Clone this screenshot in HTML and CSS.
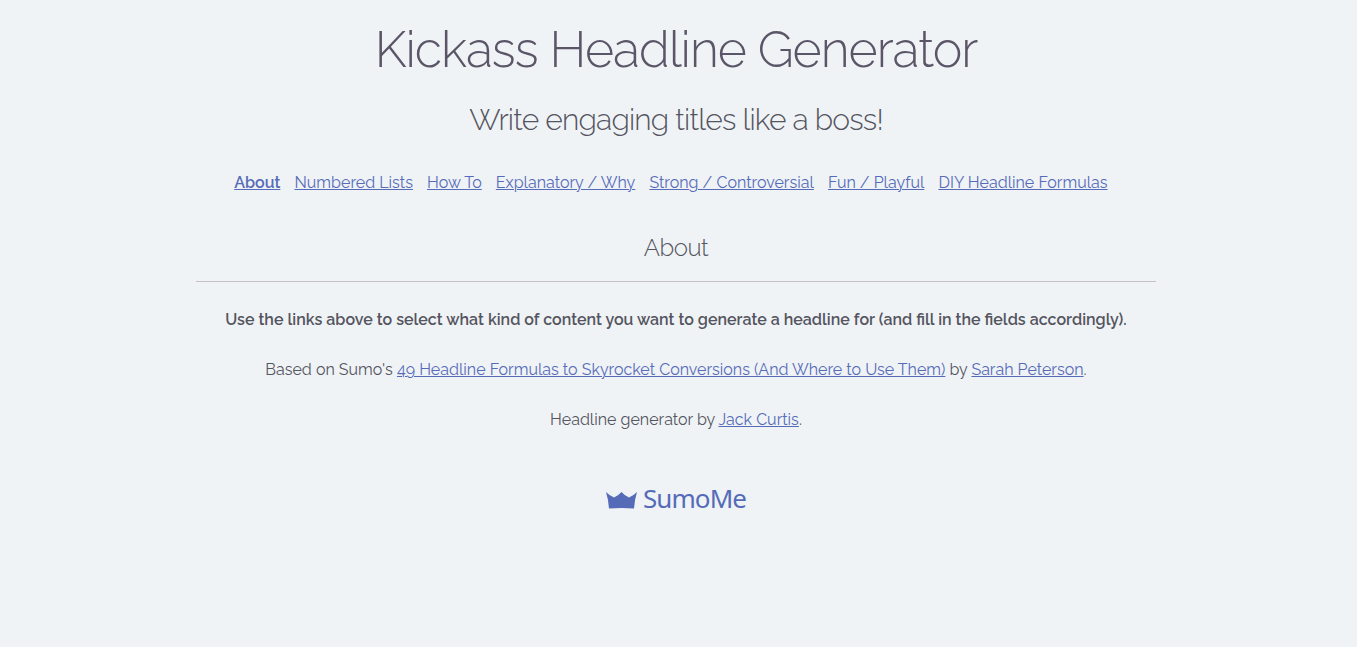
FILE: index.html
```html
<!DOCTYPE html>
<html lang="en">
<head>
<meta charset="utf-8">
<title>Kickass Headline Generator</title>
<link rel="stylesheet" href="styles.css">
</head>
<body>
<main class="page">
<h1 class="title">Kickass Headline Generator</h1>
<h2 class="subtitle">Write engaging titles like a boss!</h2>
<nav class="nav">
<a class="active" href="#">About</a>
<a href="#">Numbered Lists</a>
<a href="#">How To</a>
<a href="#">Explanatory / Why</a>
<a href="#">Strong / Controversial</a>
<a href="#">Fun / Playful</a>
<a href="#">DIY Headline Formulas</a>
</nav>
<h3 class="section">About</h3>
<p class="lead">Use the links above to select what kind of content you want to generate a headline for (and fill in the fields accordingly).</p>
<p class="credit">Based on Sumo's <a href="#">49 Headline Formulas to Skyrocket Conversions (And Where to Use Them)</a> by <a href="#">Sarah Peterson</a>.</p>
<p class="author">Headline generator by <a href="#">Jack Curtis</a>.</p>
<footer class="brand"><svg class="crown" viewBox="0 0 31 17"><path d="M0 0Q4 4 8 5.500Q12 4 15.500 0Q19 4 23 5.500Q27 4 31 0Q28.500 8 28 16.500Q15.500 15.500 3 16.500Q2.500 8 0 0Z"/></svg><span class="brand-name">SumoMe</span></footer>
</main>
</body>
</html>
```
FILE: styles.css
```css
body{margin:0;background:#eff3f6;color:#55555f;font-family:Raleway,Lato,sans-serif;font-size:16px;line-height:26px}
.page{width:960px;height:647px;margin-left:196px;text-align:center}
h1,h2,h3,p{margin:0;white-space:nowrap}
a{color:#566bb8;text-decoration:underline;text-underline-offset:1px;text-decoration-thickness:1px}
.title{font-weight:300;font-size:50px;letter-spacing:-1px;line-height:60px;padding-top:20px;color:#5b5568}
.subtitle{font-weight:300;font-size:30px;letter-spacing:-.8px;line-height:40px;padding-top:20px}
.nav{display:flex;gap:14.1px;padding:30px 0 0 38.2px;white-space:nowrap;letter-spacing:.018px}
.active{font-weight:600}
.section{font-weight:300;font-size:24px;letter-spacing:-.5px;line-height:36px;padding:34px 0 15px;border-bottom:1px solid #c8bec8}
.lead{font-weight:600;word-spacing:.08px;padding-top:25px}
.credit,.author{padding-top:24px;letter-spacing:.01px}
.brand{display:flex;align-items:center;justify-content:center;gap:6px;padding-top:52px}
.crown{width:31px;height:17px;margin-top:4px;fill:#566bb8}
.brand-name{font-family:"Noto Sans",sans-serif;font-size:26px;letter-spacing:-.9px;color:#566bb8}
```
